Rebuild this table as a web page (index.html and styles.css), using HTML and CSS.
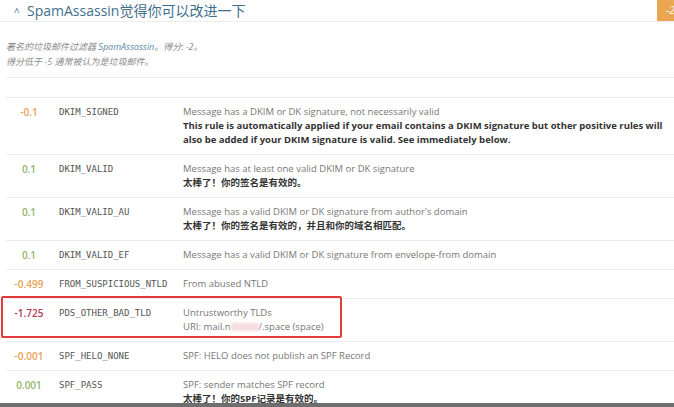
FILE: index.html
```html
<!DOCTYPE html>
<html lang="zh">
<head>
<meta charset="utf-8">
<link rel="stylesheet" href="styles.css">
</head>
<body>
<div class="page">
  <div class="header">
    <span class="caret">^</span>
    <span class="title">SpamAssassin觉得你可以改进一下</span>
    <span class="badge">-2</span>
  </div>
  <div class="intro">
    <p>著名的垃圾邮件过滤器 <span class="sa">SpamAssassin</span>。得分: -2。</p>
    <p>得分低于 -5 通常被认为是垃圾邮件。</p>
  </div>
  <div class="rules">
    <div class="row">
      <div class="score neg">-0.1</div>
      <div class="name">DKIM_SIGNED</div>
      <div class="desc">Message has a DKIM or DK signature, not necessarily valid<br><b>This rule is automatically applied if your email contains a DKIM signature but other positive rules will also be added if your DKIM signature is valid. See immediately below.</b></div>
    </div>
    <div class="row">
      <div class="score pos">0.1</div>
      <div class="name">DKIM_VALID</div>
      <div class="desc">Message has at least one valid DKIM or DK signature<br><b>太棒了！你的签名是有效的。</b></div>
    </div>
    <div class="row">
      <div class="score pos">0.1</div>
      <div class="name">DKIM_VALID_AU</div>
      <div class="desc">Message has a valid DKIM or DK signature from author's domain<br><b>太棒了！你的签名是有效的，并且和你的域名相匹配。</b></div>
    </div>
    <div class="row">
      <div class="score pos">0.1</div>
      <div class="name">DKIM_VALID_EF</div>
      <div class="desc">Message has a valid DKIM or DK signature from envelope-from domain</div>
    </div>
    <div class="row">
      <div class="score neg">-0.499</div>
      <div class="name">FROM_SUSPICIOUS_NTLD</div>
      <div class="desc">From abused NTLD</div>
    </div>
    <div class="row marked">
      <div class="score bad">-1.725</div>
      <div class="name">PDS_OTHER_BAD_TLD</div>
      <div class="desc">Untrustworthy TLDs<br>URI: mail.n<span class="blur"></span>/.space (space)</div>
      <span class="annot"></span>
    </div>
    <div class="row">
      <div class="score neg">-0.001</div>
      <div class="name">SPF_HELO_NONE</div>
      <div class="desc">SPF: HELO does not publish an SPF Record</div>
    </div>
    <div class="row">
      <div class="score pos">0.001</div>
      <div class="name">SPF_PASS</div>
      <div class="desc">SPF: sender matches SPF record<br><b>太棒了！你的SPF记录是有效的。</b></div>
    </div>
  </div>
</div>
</body>
</html>
```
FILE: styles.css
```css
html, body {
  margin: 0;
  padding: 0;
  background: #fff;
}
.page {
  width: 674px;
  height: 403px;
  overflow: hidden;
  border-bottom: 4px solid #6e6e6e;
  font-family: "Open Sans", "Noto Sans CJK SC", sans-serif;
}
.header {
  height: 21px;
  display: flex;
  align-items: center;
  border-bottom: 1px solid #ececec;
  color: #3f6f8e;
}
.caret {
  margin-left: 14px;
  width: 13px;
  font-size: 10px;
  line-height: 21px;
  padding-top: 3px;
  color: #4a6f88;
}
.title {
  font-size: 14px;
  line-height: 21px;
  font-family: "Open Sans", "Noto Sans CJK SC", sans-serif;
}
.badge {
  margin-left: auto;
  width: 8px;
  height: 21px;
  padding-left: 9px;
  background: #eaa650;
  color: #fff;
  font-size: 10px;
  line-height: 21px;
  overflow: hidden;
  white-space: nowrap;
  font-style: italic;
}
.intro {
  margin: 17px 0 0 6px;
  padding-bottom: 8px;
  border-bottom: 1px solid #ececec;
  font-size: 9px;
  line-height: 15px;
  font-style: italic;
  color: #8a8a8a;
}
.intro p {
  margin: 0;
}
.sa {
  color: #5b87ad;
}
.rules {
  margin: 19px 0 0 6px;
}
.row {
  display: grid;
  grid-template-columns: 46px 131px 1fr;
  border-top: 1px solid #ececec;
  padding: 7px 0;
  font-size: 9.5px;
  line-height: 14px;
}
.row.marked {
  position: relative;
}
.score {
  text-align: center;
  font-weight: 600;
  font-size: 10px;
}
.neg { color: #e9a255; }
.pos { color: #93b66c; }
.bad { color: #b33a52; }
.name {
  padding-left: 7px;
  font-family: "DejaVu Sans Mono", monospace;
  font-size: 9px;
  color: #555;
}
.desc {
  color: #777;
}
.desc b {
  color: #333;
  font-weight: 700;
}
.blur {
  display: inline-block;
  width: 28px;
  height: 8px;
  vertical-align: middle;
  background: #f7dde0;
  filter: blur(1.5px);
}
.annot {
  position: absolute;
  left: -5px;
  top: -3px;
  width: 337px;
  height: 38px;
  border: 2px solid #e23b3b;
  border-radius: 2px;
  pointer-events: none;
}
```
